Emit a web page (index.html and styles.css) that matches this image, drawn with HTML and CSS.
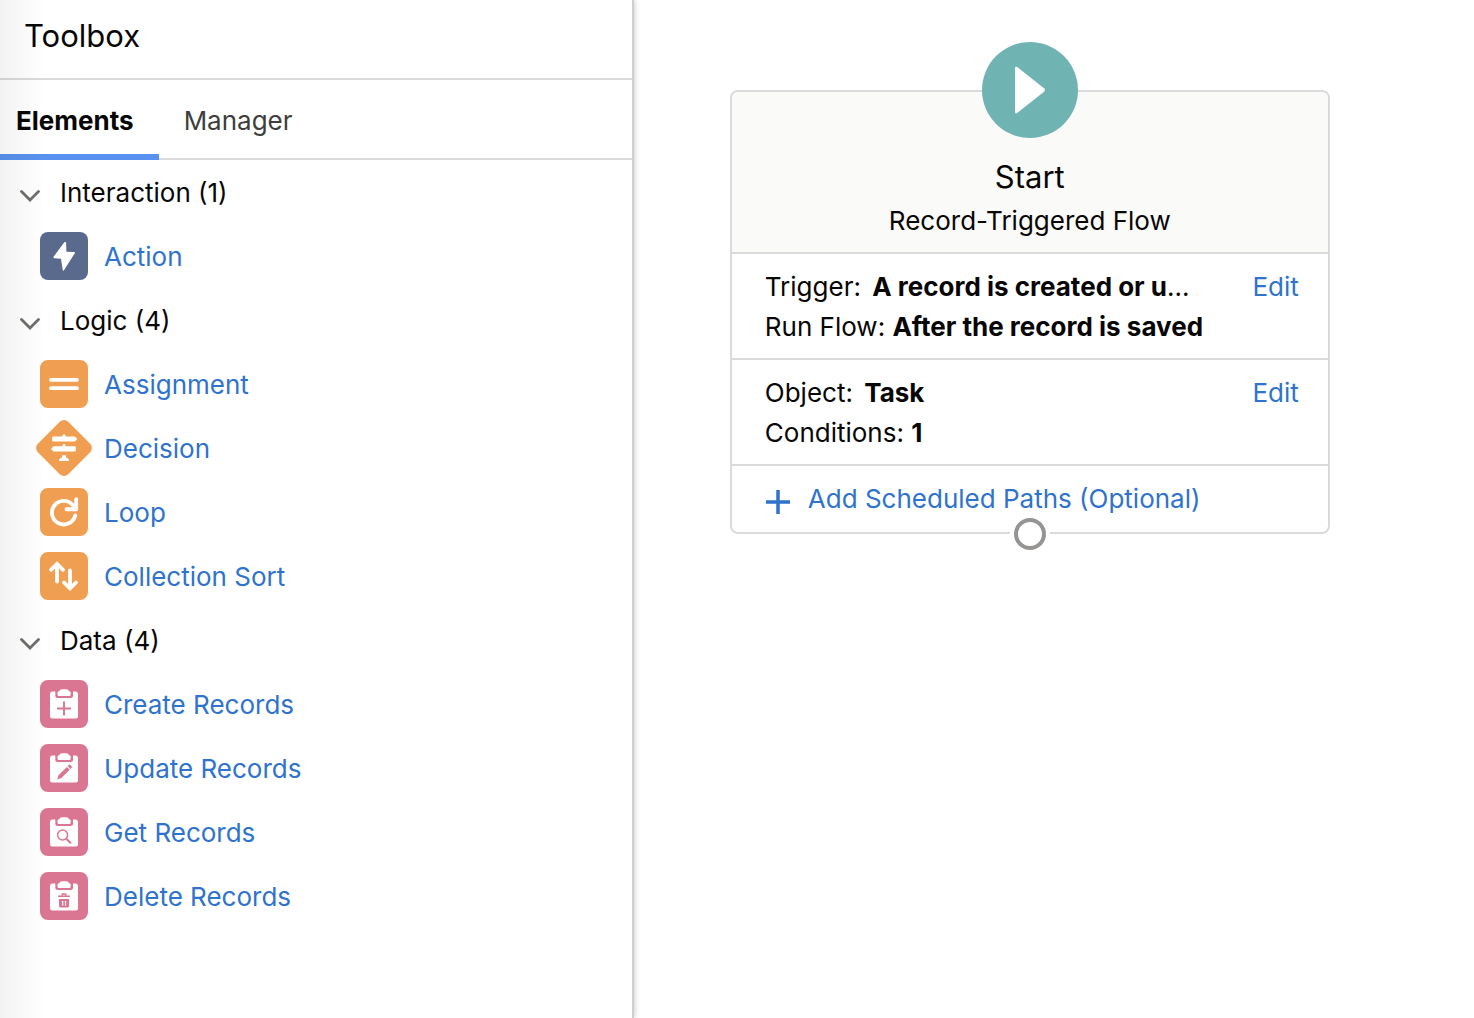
FILE: index.html
```html
<!DOCTYPE html>
<html lang="en">
<head>
  <meta charset="UTF-8">
  <meta name="viewport" content="width=device-width, initial-scale=1.0">
  <title>Flow Builder</title>
  <link rel="stylesheet" href="styles.css">
</head>
<body>
  <svg width="0" height="0" class="defs" aria-hidden="true">
    <symbol id="chevron" viewBox="0 0 20 12">
      <path d="M1.500 1.500 10 10l8.500-8.500" fill="none" stroke="#706e6b" stroke-width="2.800" stroke-linecap="round"/>
    </symbol>
    <symbol id="clipboard" viewBox="0 0 48 48">
      <rect x="10" y="11.500" width="28" height="27" rx="2.500" fill="#fff"/>
      <path d="M15.300 9h17.700v6.500a2.500 2.500 0 0 1-2.500 2.500h-12.700a2.500 2.500 0 0 1-2.500-2.500z" fill="#da7592"/>
      <path d="M17.500 12.500q0-1 1.500-1.300Q20 9.300 22 9.300h4.500q2 0 2.700 1.900 1.500.3 1.500 1.300v2q0 1.500-1.500 1.500H19q-1.500 0-1.500-1.500z" fill="#fff"/>
    </symbol>
  </svg>

  <div class="builder">
    <aside class="toolbox">
      <h2 class="toolbox-title">Toolbox</h2>
      <div class="tabs" role="tablist">
        <button class="tab active" role="tab" aria-selected="true">Elements</button>
        <button class="tab" role="tab" aria-selected="false">Manager</button>
      </div>

      <section class="group">
        <button class="group-header"><svg class="chevron"><use href="#chevron"/></svg>Interaction (1)</button>
        <ul>
          <li>
            <svg class="icon action" viewBox="0 0 48 48"><path d="M24.300 10.300 13.600 24.700q-.6 1.300.7 1.500l6.700.5 1.700 11.300q.5 1.200 1.400.1l10.700-16.900q.6-1.100-.6-1.200l-7.800-.2-.3-9.200q-.6-1.200-1.800-.3z" fill="#fff"/></svg>
            <a href="#">Action</a>
          </li>
        </ul>
      </section>

      <section class="group">
        <button class="group-header"><svg class="chevron"><use href="#chevron"/></svg>Logic (4)</button>
        <ul>
          <li>
            <svg class="icon logic" viewBox="0 0 48 48"><path d="M11 19.800h26M11 28.200h26" stroke="#fff" stroke-width="3.800" stroke-linecap="round"/></svg>
            <a href="#">Assignment</a>
          </li>
          <li>
            <svg class="icon" viewBox="0 0 48 48">
              <rect x="2.500" y="2.500" width="43" height="43" rx="6" fill="#ef9e52" transform="rotate(45 24 24)"/>
              <path d="M13 12.500h9.300q.2-2.200 1.700-2.200t1.700 2.200h9.100l2.500 2.500-2.500 2.600H13q-.8 0-.8-.8v-3.500q0-.8.8-.8zM13.500 22.200h8.800q.2-2.200 1.700-2.200t1.700 2.200H35q.8 0 .8.800v3.700q0 .8-.8.800H13.500L11 24.900zM22 31.200h4v2.200q3 .8 3 3.500H19q0-2.700 3-3.500z" fill="#fff"/>
            </svg>
            <a href="#">Decision</a>
          </li>
          <li>
            <svg class="icon logic" viewBox="0 0 48 48"><path d="M35.200 27.500a11.800 11.800 0 1 1-2.500-10.500l3 3.500M26.500 21.200h9.700V11.300" fill="none" stroke="#fff" stroke-width="3.900" stroke-linecap="round" stroke-linejoin="round"/></svg>
            <a href="#">Loop</a>
          </li>
          <li>
            <svg class="icon logic" viewBox="0 0 48 48"><path d="M17 29.500V12M11 17.800l6-5.800 6 5.800M30 18.500V36M24 30.500l6 5.800 6-5.800" fill="none" stroke="#fff" stroke-width="3.800" stroke-linecap="round"/></svg>
            <a href="#">Collection Sort</a>
          </li>
        </ul>
      </section>

      <section class="group">
        <button class="group-header"><svg class="chevron"><use href="#chevron"/></svg>Data (4)</button>
        <ul>
          <li>
            <svg class="icon data" viewBox="0 0 48 48"><use href="#clipboard"/><path d="M17 28.500h14M24 21.500v14" stroke="#da7592" stroke-width="1.900"/></svg>
            <a href="#">Create Records</a>
          </li>
          <li>
            <svg class="icon data" viewBox="0 0 48 48"><use href="#clipboard"/><path d="M17.200 35.500 18.500 31.200 26.800 22.900 29.700 25.800 21.400 34.100zM27.600 22.100 28.800 20.900q.8-.6 1.600.1l1.200 1.200q.7.800 0 1.600L30.500 25z" fill="#da7592"/></svg>
            <a href="#">Update Records</a>
          </li>
          <li>
            <svg class="icon data" viewBox="0 0 48 48"><use href="#clipboard"/><circle cx="22.600" cy="27" r="5" fill="none" stroke="#da7592" stroke-width="1.500"/><path d="m26.300 30.700 4 4" stroke="#da7592" stroke-width="2" stroke-linecap="round"/></svg>
            <a href="#">Get Records</a>
          </li>
          <li>
            <svg class="icon data" viewBox="0 0 48 48"><use href="#clipboard"/><path d="M18 24.300h12M22.300 24v-2h3.400v2" fill="none" stroke="#da7592" stroke-width="1.400"/><path d="M19 27h10v7q0 1.600-1.600 1.600h-6.800q-1.600 0-1.600-1.600z" fill="#da7592"/><path d="M22.700 29v4.500M25.500 29v4.500" stroke="#fff" stroke-width="1.200"/></svg>
            <a href="#">Delete Records</a>
          </li>
        </ul>
      </section>
    </aside>

    <main class="canvas">
      <article class="start-node">
        <svg class="play" viewBox="0 0 96 96"><circle cx="48" cy="48" r="48" fill="#70b3b3"/><path d="M33 26.500q0-3 2.500-1.300l26.500 21q1.800 1.800 0 3.600l-26.500 21q-2.500 1.700-2.500-1.300z" fill="#fff"/></svg>
        <header class="start-header">
          <h1>Start</h1>
          <p>Record-Triggered Flow</p>
        </header>
        <div class="start-row">
          <div class="details">
            <p class="first">Trigger: <b>A record is created or u</b>...</p>
            <p>Run Flow: <b>After the record is saved</b></p>
          </div>
          <a href="#">Edit</a>
        </div>
        <div class="start-row">
          <div class="details">
            <p class="first">Object: <b>Task</b></p>
            <p>Conditions: <b>1</b></p>
          </div>
          <a href="#">Edit</a>
        </div>
        <div class="start-row">
          <a href="#" class="add-path"><svg class="plus" viewBox="0 0 24 24"><path d="M0 12h24M12 0v24" stroke="currentColor" stroke-width="3.500"/></svg>Add Scheduled Paths (Optional)</a>
        </div>
        <span class="connector"></span>
      </article>
    </main>
  </div>
</body>
</html>
```

FILE: styles.css
```css
* {
  box-sizing: border-box;
}
body {
  margin: 0;
  font-family: Inter, "Liberation Sans", sans-serif;
  font-size: 26px;
  line-height: 40px;
  color: #080707;
  background-color: #fff;
}
h1, h2, p, ul {
  margin: 0;
  padding: 0;
  font-weight: 400;
}
h1, h2 {
  font-size: 31px;
}
ul {
  list-style: none;
}
a {
  color: #2f73cc;
  text-decoration: none;
}
button {
  font: inherit;
  color: inherit;
  background: none;
  border: 0;
  padding: 0;
  cursor: pointer;
}
.defs {
  position: absolute;
}
.builder {
  display: flex;
  min-height: 100vh;
}

/* toolbox */
.toolbox {
  position: relative;
  flex: 0 0 43%;
  border-right: 2px solid #cfcfcf;
  box-shadow: 0 0 6px rgba(0, 0, 0, 0.25);
}
.toolbox::before {
  content: "";
  position: absolute;
  top: 0;
  bottom: 0;
  left: 0;
  width: 44px;
  background: linear-gradient(to right, rgba(0, 0, 0, 0.05), transparent);
  pointer-events: none;
}
.toolbox-title {
  padding: 16px 24px 22px;
  border-bottom: 2px solid #dadada;
}
.tabs {
  display: flex;
  height: 80px;
  border-bottom: 2px solid #dadada;
}
.tab {
  height: 80px;
  padding: 8px 25px 0;
  border-bottom: 6px solid transparent;
  color: #3e3e3c;
}
.tab.active {
  padding-left: 16px;
  font-weight: 700;
  color: #080707;
  border-bottom-color: #5891ef;
}
.group-header {
  display: flex;
  align-items: center;
  width: 100%;
  height: 64px;
  gap: 20px;
  padding: 2px 20px 0;
}
.chevron {
  width: 20px;
  height: 12px;
  margin-top: 6px;
}
.group li {
  display: flex;
  align-items: center;
  height: 64px;
  gap: 16px;
  padding-left: 40px;
}
.group li a {
  padding-top: 2px;
}
.icon {
  width: 48px;
  height: 48px;
  border-radius: 8px;
  overflow: visible;
}
.icon.action {
  background-color: #596a8d;
}
.icon.logic {
  background-color: #ef9e52;
}
.icon.data {
  background-color: #da7592;
}

/* canvas */
.canvas {
  flex: 1;
  padding: 90px 96px;
}
.start-node {
  position: relative;
  max-width: 600px;
  border: 2px solid #dadada;
  border-radius: 8px;
}
.play {
  position: absolute;
  top: -50px;
  left: calc(50% - 48px);
  width: 96px;
  height: 96px;
}
.start-header {
  padding: 65px 12px 11px;
  text-align: center;
  background-color: #fafaf9;
  border-radius: 6px 6px 0 0;
}
.start-header h1 {
  margin-bottom: 4px;
}
.start-row {
  display: flex;
  align-items: flex-start;
  justify-content: space-between;
  padding: 13px 29px 11px 33px;
  border-top: 2px solid #dadada;
}
.first b {
  margin-left: 4px;
}
.add-path {
  display: flex;
  align-items: center;
  gap: 18px;
  padding-bottom: 2px;
}
.plus {
  width: 24px;
  height: 24px;
  margin: 6px 0 0 1px;
}
.connector {
  position: absolute;
  left: calc(50% - 16px);
  bottom: -18px;
  width: 32px;
  height: 32px;
  border: 4px solid #969492;
  border-radius: 50%;
  background-color: #fff;
  box-shadow: 0 0 0 4px #fff;
}
```
